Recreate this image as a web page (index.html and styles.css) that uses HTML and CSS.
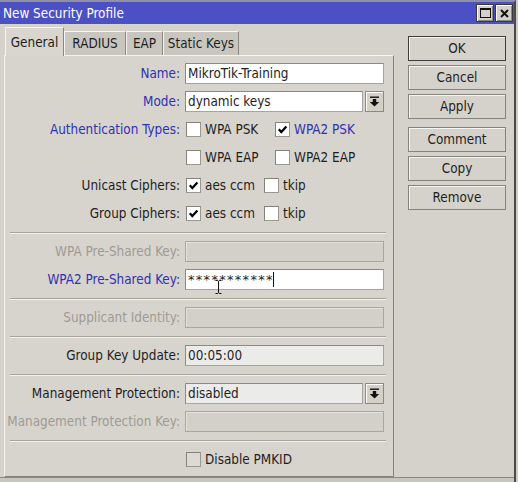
FILE: index.html
```html
<!DOCTYPE html>
<html>
<head>
<meta charset="utf-8">
<link rel="stylesheet" href="styles.css">
</head>
<body>
<div class="window">
  <div class="titlebar">
    <span class="title">New Security Profile</span>
    <div class="tb-buttons">
      <span class="tb-btn"><svg width="11" height="10" viewBox="0 0 11 10"><rect x="0.5" y="0.5" width="10" height="9" fill="none" stroke="#111"/><rect x="0" y="0" width="11" height="2" fill="#111"/></svg></span>
      <span class="tb-btn"><svg width="9" height="9" viewBox="0 0 9 9"><path d="M1 1L8 8M8 1L1 8" stroke="#111" stroke-width="2"/></svg></span>
    </div>
  </div>
  <div class="body">
    <div class="main">
      <div class="tabs">
        <div class="tab active w-general">General</div>
        <div class="tab w-radius">RADIUS</div>
        <div class="tab w-eap">EAP</div>
        <div class="tab w-static">Static Keys</div>
      </div>
      <div class="panel">
        <div class="section">
          <div class="row">
            <span class="label blue">Name:</span>
            <div class="input">MikroTik-Training</div>
          </div>
          <div class="row">
            <span class="label blue">Mode:</span>
            <div class="select">
              <div class="input">dynamic keys</div>
              <div class="drop"><svg width="11" height="11" viewBox="0 0 11 11"><rect x="1" y="0.5" width="9" height="1.4" fill="#111"/><rect x="3.8" y="3" width="3.4" height="3.5" fill="#111"/><polygon points="0.8,6 10.2,6 5.5,10.6" fill="#111"/></svg></div>
            </div>
          </div>
          <div class="row">
            <span class="label blue">Authentication Types:</span>
            <div class="checks auth">
              <label class="check"><span class="box"></span><span>WPA PSK</span></label>
              <label class="check"><span class="box"><svg width="11" height="11" viewBox="0 0 11 11"><polyline points="1.8,5.2 4.3,8 9.4,2.4" fill="none" stroke="#000" stroke-width="2.2"/></svg></span><span class="blue">WPA2 PSK</span></label>
            </div>
          </div>
          <div class="row">
            <span class="label"></span>
            <div class="checks auth">
              <label class="check"><span class="box"></span><span>WPA EAP</span></label>
              <label class="check"><span class="box"></span><span>WPA2 EAP</span></label>
            </div>
          </div>
          <div class="row">
            <span class="label">Unicast Ciphers:</span>
            <div class="checks cipher">
              <label class="check"><span class="box"><svg width="11" height="11" viewBox="0 0 11 11"><polyline points="1.8,5.2 4.3,8 9.4,2.4" fill="none" stroke="#000" stroke-width="2.2"/></svg></span><span>aes ccm</span></label>
              <label class="check"><span class="box"></span><span>tkip</span></label>
            </div>
          </div>
          <div class="row">
            <span class="label">Group Ciphers:</span>
            <div class="checks cipher">
              <label class="check"><span class="box"><svg width="11" height="11" viewBox="0 0 11 11"><polyline points="1.8,5.2 4.3,8 9.4,2.4" fill="none" stroke="#000" stroke-width="2.2"/></svg></span><span>aes ccm</span></label>
              <label class="check"><span class="box"></span><span>tkip</span></label>
            </div>
          </div>
        </div>
        <div class="sep"></div>
        <div class="section">
          <div class="row">
            <span class="label dim">WPA Pre-Shared Key:</span>
            <div class="input disabled"></div>
          </div>
          <div class="row">
            <span class="label blue">WPA2 Pre-Shared Key:</span>
            <div class="input pw"><span class="stars">***********</span><span class="caret"></span>
              <svg class="ibeam" width="7" height="14" viewBox="0 0 7 14"><path d="M0.5 0.5h2.2l0.8 0.8 0.8-0.8h2.2M3.5 1.2v11.6M0.5 13.5h2.2l0.8-0.8 0.8 0.8h2.2" fill="none" stroke="#111" stroke-width="1"/></svg>
            </div>
          </div>
        </div>
        <div class="sep"></div>
        <div class="section">
          <div class="row">
            <span class="label dim">Supplicant Identity:</span>
            <div class="input disabled"></div>
          </div>
        </div>
        <div class="sep"></div>
        <div class="section">
          <div class="row">
            <span class="label">Group Key Update:</span>
            <div class="input soft">00:05:00</div>
          </div>
        </div>
        <div class="sep"></div>
        <div class="section">
          <div class="row">
            <span class="label">Management Protection:</span>
            <div class="select">
              <div class="input soft">disabled</div>
              <div class="drop"><svg width="11" height="11" viewBox="0 0 11 11"><rect x="1" y="0.5" width="9" height="1.4" fill="#111"/><rect x="3.8" y="3" width="3.4" height="3.5" fill="#111"/><polygon points="0.8,6 10.2,6 5.5,10.6" fill="#111"/></svg></div>
            </div>
          </div>
          <div class="row">
            <span class="label dim">Management Protection Key:</span>
            <div class="input disabled"></div>
          </div>
        </div>
        <div class="sep"></div>
        <div class="section">
          <div class="row">
            <span class="label"></span>
            <div class="checks">
              <label class="check"><span class="box grey"></span><span>Disable PMKID</span></label>
            </div>
          </div>
        </div>
      </div>
    </div>
    <div class="actions">
      <div class="btn default">OK</div>
      <div class="btn">Cancel</div>
      <div class="btn">Apply</div>
      <div class="btn spaced">Comment</div>
      <div class="btn">Copy</div>
      <div class="btn">Remove</div>
    </div>
  </div>
  <div class="status"></div>
</div>
</body>
</html>
```
FILE: styles.css
```css
* { box-sizing: border-box; }
html, body { margin: 0; padding: 0; }
body {
  width: 518px;
  height: 482px;
  overflow: hidden;
  background: #cfccc5;
  font-family: "DejaVu Sans Condensed", "DejaVu Sans", sans-serif;
  font-size: 13.4px;
  color: #1e1e1e;
}
.window {
  width: 516px;
  height: 482px;
  background: #d5d2cc;
  border-top: 2px solid #8f90a8;
  border-right: 2px solid #4a4a4a;
  display: flex;
  flex-direction: column;
}
.titlebar {
  height: 22px;
  flex: none;
  background: #4b50c4;
  display: flex;
  align-items: center;
  justify-content: space-between;
  padding: 0 1px 0 3px;
}
.title { color: #fff; }
.tb-buttons { display: flex; gap: 1px; }
.tb-btn {
  width: 18px;
  height: 18px;
  background: #d4d0c8;
  border: 1px solid #3a3a3a;
  box-shadow: inset 1px 1px 0 #fff, inset -1px -1px 0 #8a877f;
  display: flex;
  align-items: center;
  justify-content: center;
}
.body {
  flex: none;
  height: 454px;
  display: flex;
  padding: 3px 0 0 4px;
  border-bottom: 1px solid #8a877f;
}
.main { width: 390px; display: flex; flex-direction: column; }
.tabs {
  height: 28px;
  display: flex;
  align-items: flex-end;
  padding-left: 1px;
}
.tab {
  height: 24px;
  display: flex;
  align-items: center;
  justify-content: center;
  background: #c9c6bf;
  border: 1px solid #f4f3f0;
  border-right-color: #8a877f;
  border-bottom: none;
}
.tab.active {
  height: 29px;
  margin-bottom: -1px;
  background: #d9d6d0;
  position: relative;
  z-index: 1;
}
.w-general { width: 59px; }
.w-radius { width: 62px; }
.w-eap { width: 37px; }
.w-static { width: 76px; }
.panel {
  background: #d7d4ce;
  border: 1px solid;
  border-color: #f4f3f0 #85827b #85827b #f4f3f0;
  padding: 7px 0 6px 0;
}
.section { display: flex; flex-direction: column; gap: 7px; }
.row {
  display: grid;
  grid-template-columns: 175px 199px;
  column-gap: 5px;
  height: 21px;
  align-items: center;
}
.label { text-align: right; white-space: nowrap; }
.blue { color: #2f30b2; }
.dim { color: #9e9b94; }
.input {
  height: 21px;
  border: 1px solid #a7a49d;
  border-top-color: #8c8982;
  border-left-color: #8c8982;
  background: #fff;
  padding: 0 2px;
  display: flex;
  align-items: center;
  white-space: nowrap;
  overflow: hidden;
}
.input.disabled {
  background: #d3d0ca;
  border-color: #a9a6a0;
  box-shadow: inset 1px 1px 0 #e4e2dd;
}
.input.soft { background: #ebebea; }
.input.pw { position: relative; overflow: visible; }
.stars { font-family: "DejaVu Sans", sans-serif; font-size: 13px; letter-spacing: 1.3px; }
.caret {
  display: inline-block;
  width: 1px;
  height: 15px;
  background: #111;
  margin-left: -1px;
}
.ibeam { position: absolute; left: 29px; top: 10px; }
.select { display: flex; gap: 2px; }
.select .input { flex: 1; }
.drop {
  width: 19px;
  height: 21px;
  border: 1px solid #8c8982;
  background: #d4d0c8;
  box-shadow: inset 1px 1px 0 #fff;
  display: flex;
  align-items: center;
  justify-content: center;
}
.checks { display: flex; align-items: center; }
.check { display: flex; align-items: center; gap: 4px; white-space: nowrap; }
.checks.auth .check { width: 89px; }
.checks.cipher .check { width: 78px; }
.box {
  width: 15px;
  height: 15px;
  margin-left: 1px;
  border: 1px solid #9a978f;
  border-top-color: #85827b;
  border-left-color: #85827b;
  background: #fff;
  display: flex;
  align-items: center;
  justify-content: center;
}
.box.grey { background: #dcdad5; }
.sep {
  margin: 8px 7px 7px 5px;
  border-top: 1px solid #a6a39c;
  border-bottom: 1px solid #f3f2ef;
}
.actions {
  width: 98px;
  margin-left: 14px;
  padding-top: 9px;
  display: flex;
  flex-direction: column;
  gap: 4px;
}
.btn {
  height: 25px;
  border: 1px solid #86837c;
  background: #d5d2cc;
  box-shadow: inset 1px 1px 0 #f5f4f1;
  display: flex;
  align-items: center;
  justify-content: center;
}
.btn.default { border-color: #3d3d3d; }
.btn.spaced { margin-top: 4px; }
.status { flex: 1; background: #c9c6bf; }
```
